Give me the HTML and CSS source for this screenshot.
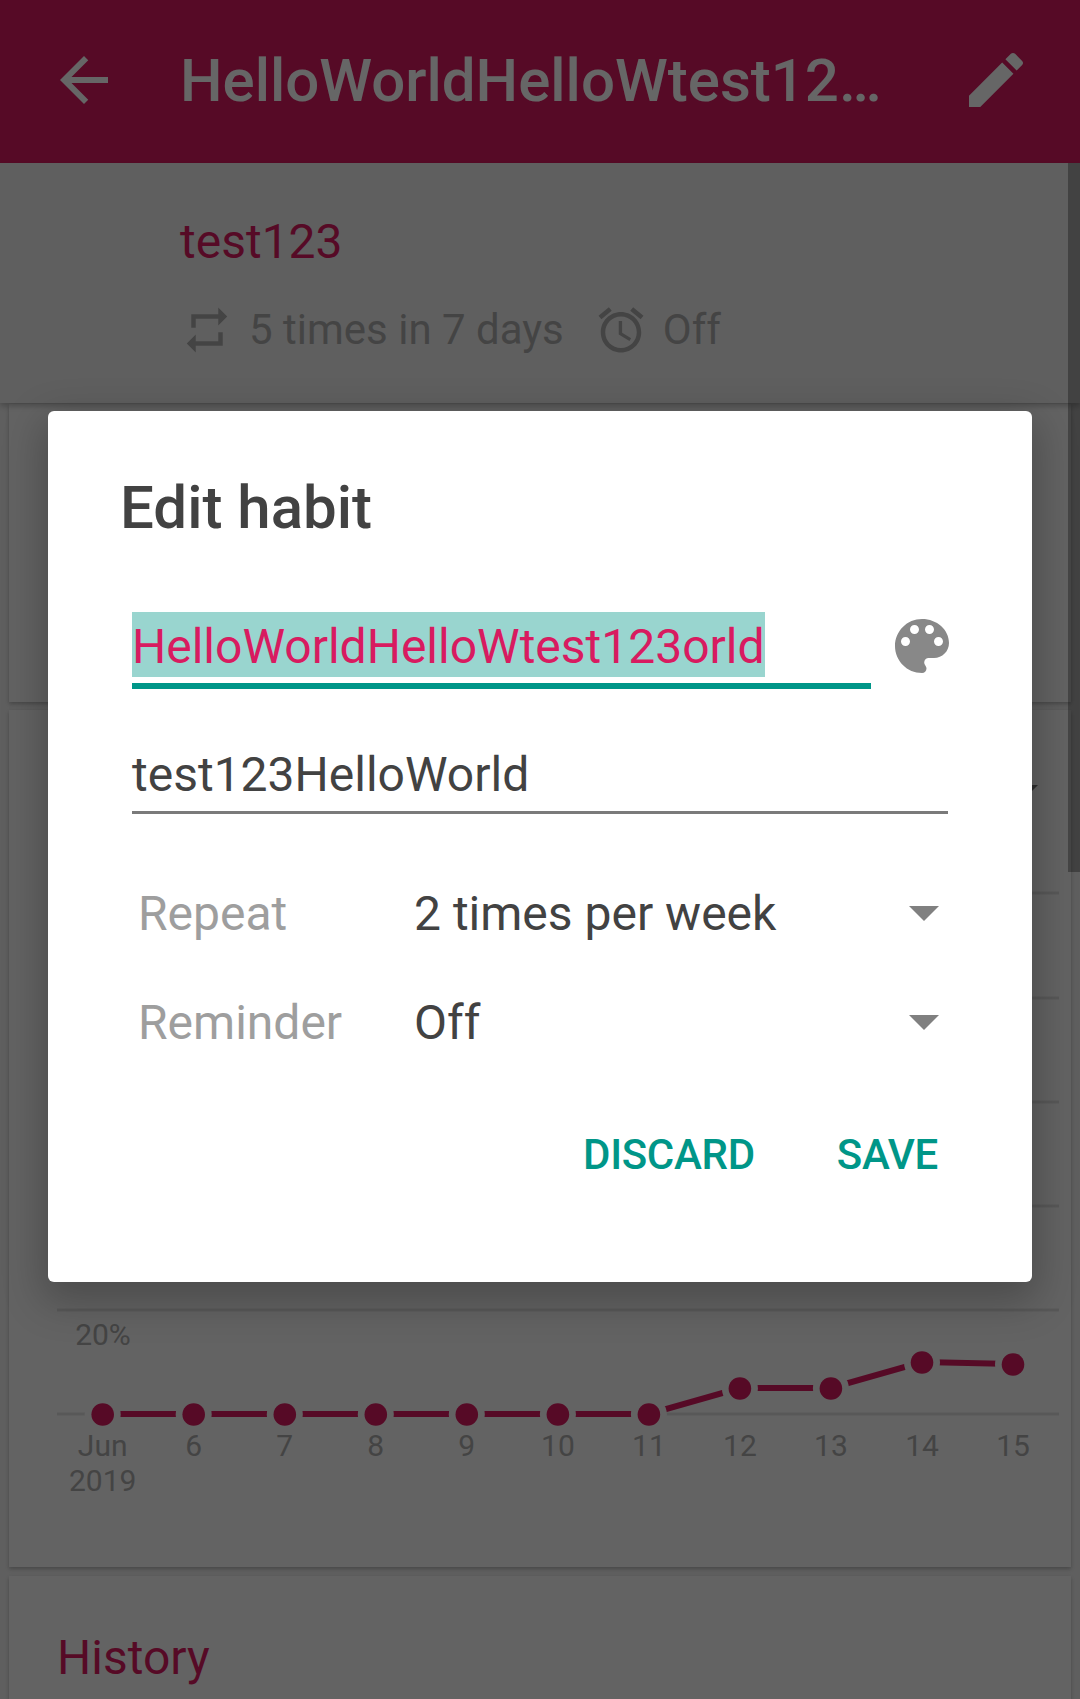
FILE: index.html
```html
<!DOCTYPE html>
<html lang="en">
<head>
  <meta charset="UTF-8" />
  <title>Edit habit</title>
  <link rel="stylesheet" href="styles.css">
</head>
<body>

<div class="toolbar">
  <svg class="tool-icon" viewBox="0 0 24 24"><path d="M20 11H7.83l5.59-5.59L12 4l-8 8 8 8 1.41-1.41L7.83 13H20v-2z"/></svg>
  <div class="toolbar-title">HelloWorldHelloWtest12…</div>
  <svg class="tool-icon" viewBox="0 0 24 24"><path d="M3 17.25V21h3.75L17.81 9.94l-3.75-3.75L3 17.25zM20.71 7.04c.39-.39.39-1.02 0-1.41l-2.34-2.34c-.39-.39-1.02-.39-1.41 0l-1.83 1.83 3.75 3.75 1.83-1.83z"/></svg>
</div>

<div class="subtitle">
  <div class="question">test123</div>
  <div class="meta">
    <svg class="meta-icon" viewBox="0 0 24 24"><path d="M7 7h10v3l4-4-4-4v3H5v6h2V7zm10 10H7v-3l-4 4 4 4v-3h12v-6h-2v4z"/></svg>
    <span class="meta-repeat">5 times in 7 days</span>
    <svg class="meta-icon" viewBox="0 0 24 24"><path d="M22 5.72l-4.6-3.86-1.29 1.53 4.6 3.86L22 5.72zM7.88 3.39L6.6 1.86 2 5.71l1.29 1.53 4.59-3.85zM12.5 8H11v6l4.75 2.85.75-1.23-4-2.37V8zM12 4c-4.97 0-9 4.03-9 9s4.02 9 9 9c4.97 0 9-4.03 9-9s-4.03-9-9-9zm0 16c-3.87 0-7-3.13-7-7s3.13-7 7-7 7 3.13 7 7-3.13 7-7 7z"/></svg>
    <span class="meta-off">Off</span>
  </div>
</div>

<div class="cards">
  <div class="card card-overview"></div>

  <div class="card card-score">
    <svg class="chart" viewBox="9 710 1062 857">
      <polygon class="chart-arrow" points="1020,785 1038,785 1029,794"/>
      <g class="chart-grid">
        <line x1="57" y1="893" x2="1059" y2="893"/>
        <line x1="57" y1="998" x2="1059" y2="998"/>
        <line x1="57" y1="1102" x2="1059" y2="1102"/>
        <line x1="57" y1="1206" x2="1059" y2="1206"/>
        <line x1="57" y1="1310" x2="1059" y2="1310"/>
        <line x1="57" y1="1414" x2="1059" y2="1414"/>
      </g>
      <polyline class="chart-line" points="102.7,1414 193.7,1414 284.8,1414 375.8,1414 466.8,1414 557.9,1414 648.9,1414 739.9,1388 830.9,1388 922,1362 1013,1364"/>
      <g class="chart-halo">
        <circle cx="102.7" cy="1414.5" r="18"/><circle cx="193.7" cy="1414.5" r="18"/><circle cx="284.8" cy="1414.5" r="18"/>
        <circle cx="375.8" cy="1414.5" r="18"/><circle cx="466.8" cy="1414.5" r="18"/><circle cx="557.9" cy="1414.5" r="18"/>
        <circle cx="648.9" cy="1414.5" r="18"/><circle cx="739.9" cy="1388.5" r="18"/><circle cx="830.9" cy="1388.5" r="18"/>
        <circle cx="922" cy="1362.5" r="18"/><circle cx="1013" cy="1364.5" r="18"/>
      </g>
      <g class="chart-dots">
        <circle cx="102.7" cy="1414.5" r="11.3"/><circle cx="193.7" cy="1414.5" r="11.3"/><circle cx="284.8" cy="1414.5" r="11.3"/>
        <circle cx="375.8" cy="1414.5" r="11.3"/><circle cx="466.8" cy="1414.5" r="11.3"/><circle cx="557.9" cy="1414.5" r="11.3"/>
        <circle cx="648.9" cy="1414.5" r="11.3"/><circle cx="739.9" cy="1388.5" r="11.3"/><circle cx="830.9" cy="1388.5" r="11.3"/>
        <circle cx="922" cy="1362.5" r="11.3"/><circle cx="1013" cy="1364.5" r="11.3"/>
      </g>
      <g class="chart-labels">
        <text x="103" y="1345">20%</text>
        <text x="102.7" y="1456">Jun</text>
        <text x="102.7" y="1491">2019</text>
        <text x="193.7" y="1456">6</text>
        <text x="284.8" y="1456">7</text>
        <text x="375.8" y="1456">8</text>
        <text x="466.8" y="1456">9</text>
        <text x="557.9" y="1456">10</text>
        <text x="648.9" y="1456">11</text>
        <text x="739.9" y="1456">12</text>
        <text x="830.9" y="1456">13</text>
        <text x="922" y="1456">14</text>
        <text x="1013" y="1456">15</text>
      </g>
    </svg>
  </div>

  <div class="card card-history">
    <div class="card-title">History</div>
  </div>
</div>

<div class="scrollbar"></div>

<div class="overlay">
  <div class="dialog">
    <h2 class="dialog-title">Edit habit</h2>

    <div class="name-row">
      <div class="name-field"><span class="selected">HelloWorldHelloWtest123orld</span></div>
      <svg class="palette" viewBox="0 0 24 24"><path d="M12 3c-4.97 0-9 4.03-9 9s4.03 9 9 9c.83 0 1.5-.67 1.5-1.5 0-.39-.15-.74-.39-1.01-.23-.26-.38-.61-.38-.99 0-.83.67-1.5 1.5-1.5H16c2.76 0 5-2.24 5-5 0-4.42-4.03-8-9-8zm-5.5 9c-.83 0-1.5-.67-1.5-1.5S5.67 9 6.5 9 8 9.67 8 10.5 7.33 12 6.5 12zm3-4C8.67 8 8 7.33 8 6.5S8.67 5 9.5 5s1.5.67 1.5 1.5S10.33 8 9.5 8zm5 0c-.83 0-1.5-.67-1.5-1.5S13.67 5 14.5 5s1.5.67 1.5 1.5S15.33 8 14.5 8zm3 4c-.83 0-1.5-.67-1.5-1.5S16.67 9 17.5 9s1.5.67 1.5 1.5-.67 1.5-1.5 1.5z"/></svg>
    </div>

    <div class="desc-field">test123HelloWorld</div>

    <div class="options">
      <div class="option-label">Repeat</div>
      <div class="option-value">2 times per week</div>
      <div class="caret"></div>
      <div class="option-label">Reminder</div>
      <div class="option-value">Off</div>
      <div class="caret"></div>
    </div>

    <div class="actions">
      <span class="action">DISCARD</span>
      <span class="action">SAVE</span>
    </div>
  </div>
</div>

</body>
</html>
```

FILE: styles.css
```css
* { box-sizing: border-box; }
html, body {
  margin: 0;
  height: 1699px;
  overflow: hidden;
}
body {
  position: relative;
  font-family: Roboto, sans-serif;
  background-color: #eee;
  color: #aaa;
}

.toolbar {
  height: 163px;
  padding: 0 48px 3px;
  display: flex;
  align-items: center;
  background-color: #d81b60;
  color: #fff;
}
.tool-icon {
  width: 72px;
  height: 72px;
  fill: #fff;
  flex: none;
}
.toolbar-title {
  flex: 1;
  padding: 1px 0 0 60px;
  font-size: 60px;
  font-weight: 500;
  line-height: 72px;
  white-space: nowrap;
}

.subtitle {
  height: 240px;
  padding: 48px 0 0 180px;
  background-color: #eee;
  box-shadow: 0 3px 6px rgba(0,0,0,0.25);
  position: relative;
}
.question {
  font-size: 48px;
  line-height: 56px;
  color: #d81b60;
  height: 56px;
  margin-top: 3px;
}
.meta {
  display: flex;
  align-items: center;
  margin-top: 33px;
  font-size: 42px;
  line-height: 54px;
  height: 54px;
}
.meta-icon {
  width: 54px;
  height: 54px;
  fill: #aaa;
  flex: none;
}
.meta-repeat { margin: 0 30px 0 15px; }
.meta-off { margin-left: 15px; }

.cards {
  padding: 1px 9px 0;
  display: flex;
  flex-direction: column;
}
.card {
  background-color: #f8f8f8;
  box-shadow: 0 2px 4px rgba(0,0,0,0.25);
}
.card-overview { height: 298px; margin-bottom: 8px; }
.card-score { height: 857px; margin-bottom: 9px; }
.card-history { padding: 54px 0 0 48px; height: 124px; }
.card-title {
  font-size: 48px;
  line-height: 56px;
  color: #d81b60;
}

.chart {
  display: block;
  width: 1062px;
  height: 857px;
}
.chart-arrow { fill: #777; }
.chart-grid line { stroke: #ddd; stroke-width: 3; }
.chart-line { fill: none; stroke: #d81b60; stroke-width: 6; }
.chart-halo circle { fill: #f8f8f8; }
.chart-dots circle { fill: #d81b60; }
.chart-labels text {
  font-size: 30px;
  fill: #aaa;
  text-anchor: middle;
}

.scrollbar {
  position: absolute;
  top: 163px;
  right: 0;
  width: 12px;
  height: 709px;
  background-color: rgba(0,0,0,0.3);
}

.overlay {
  position: absolute;
  top: 0;
  left: 0;
  right: 0;
  bottom: 0;
  padding: 411px 48px 0;
  background-color: rgba(0,0,0,0.6);
}
.dialog {
  height: 871px;
  padding-top: 60px;
  border-radius: 6px;
  background-color: #fff;
  color: #424242;
  box-shadow: 0 14px 40px 6px rgba(0,0,0,0.24);
}
.dialog-title {
  margin: 0 0 68px 72px;
  font-size: 60px;
  font-weight: 500;
  line-height: 73px;
}

.name-row {
  display: flex;
  align-items: flex-start;
  margin-left: 84px;
}
.name-field {
  width: 739px;
  height: 77px;
  border-bottom: 6px solid #009688;
}
.selected {
  display: inline-block;
  vertical-align: top;
  height: 65px;
  font-size: 48px;
  line-height: 69px;
  color: #d81b60;
  background-color: #99d5cf;
}
.palette {
  width: 72px;
  height: 72px;
  margin: -2px 0 0 15px;
  fill: #888;
  flex: none;
}

.desc-field {
  width: 816px;
  margin: 58px 0 45px 84px;
  padding-bottom: 8px;
  font-size: 48px;
  line-height: 56px;
  border-bottom: 3px solid #7a7a7a;
}

.options {
  display: grid;
  grid-template-columns: 278px 1fr 30px;
  grid-auto-rows: 109px;
  align-items: center;
  margin: 0 93px 0 88px;
  font-size: 48px;
  line-height: 56px;
}
.option-label { color: #9e9e9e; padding-left: 2px; }
.caret {
  width: 0;
  height: 0;
  border-left: 15px solid transparent;
  border-right: 15px solid transparent;
  border-top: 15px solid #808080;
}

.actions {
  display: flex;
  justify-content: flex-end;
  gap: 82px;
  margin: 48px 94px 0 0;
}
.action {
  font-size: 42px;
  font-weight: 500;
  line-height: 60px;
  letter-spacing: -0.3px;
  color: #009688;
}
```
